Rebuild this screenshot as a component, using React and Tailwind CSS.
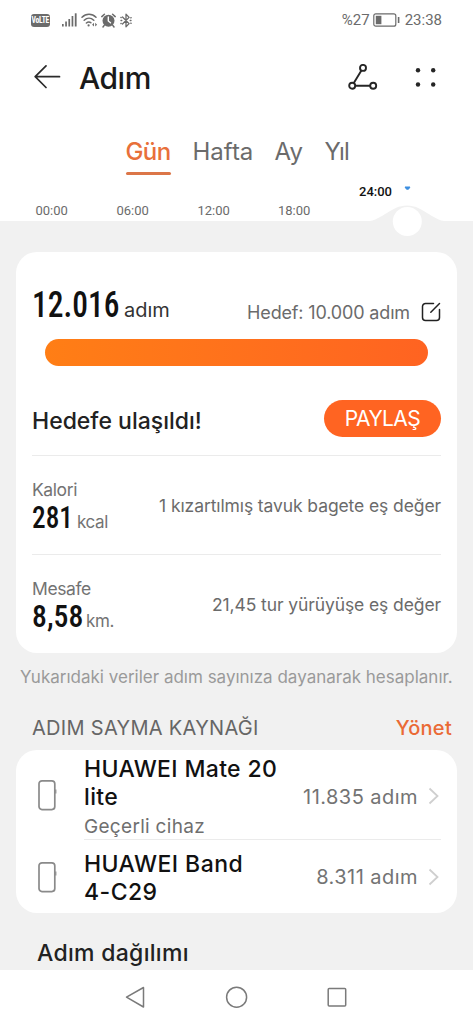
import React from "react";

function StatusBar() {
  return (
    <div className="flex h-10 items-center justify-between pl-[31px] pr-[31px] font-[Roboto,sans-serif] text-[#6b6b6b]">
      <div className="flex items-center">
        <div className="flex h-[13px] w-[19px] items-center justify-center rounded-[3px] bg-[#6b6b6b]">
          <span className="scale-x-[.85] text-[9px] font-bold leading-none tracking-[-0.3px] text-white font-stretch-condensed">VoLTE</span>
        </div>
        <svg className="ml-3" width="15" height="14" viewBox="0 0 15 14" fill="#6b6b6b">
          <rect x="0" y="11" width="1.7" height="2.5" />
          <rect x="3.2" y="8.5" width="1.7" height="5" />
          <rect x="6.4" y="6" width="1.7" height="7.5" />
          <rect x="9.6" y="3" width="1.7" height="10.5" />
          <rect x="12.8" y="0.3" width="1.8" height="13.2" />
        </svg>
        <svg className="ml-1" width="17" height="14" viewBox="0 0 17 14" fill="none" stroke="#6b6b6b" strokeWidth="1.5" strokeLinecap="round">
          <path d="M1 4.200C5 .2 11 .2 15 4.200M3.200 7.200c2.800-2.600 6.800-2.600 9.600 0M5.400 10c1.600-1.300 3-1.300 4.400-.3" />
          <circle cx="7.600" cy="12.400" r="1.100" fill="#6b6b6b" stroke="none" />
          <path d="M13 9.800l-1.900 1.900L13 13.600zM14.200 9.800l1.900 1.900-1.900 1.900z" fill="#6b6b6b" stroke="none" />
        </svg>
        <svg className="ml-[3px]" width="15" height="15" viewBox="0 0 15 15" fill="none" stroke="#6b6b6b" strokeLinecap="round">
          <circle cx="7.5" cy="7.700" r="6" fill="#6b6b6b" stroke="none" />
          <path d="M.8 3.600L3.400 1.200M14.200 3.600L11.600 1.200M3.200 12.400l-1.200 1.600M11.800 12.400l1.200 1.600" strokeWidth="1.5" />
          <path d="M7.300 4v4l2.200 1.800" stroke="#fff" strokeWidth="1.4" />
        </svg>
        <svg className="ml-[4px]" width="12" height="15" viewBox="0 0 12 15" fill="none" stroke="#6b6b6b" strokeWidth="1.300" strokeLinejoin="round" strokeLinecap="round">
          <path d="M2.500 4l6.600 6.600L6 13.800v-12.600l3.100 3.200L2.500 11" />
          <path d="M1 7.500h.8M10.200 7.500h.8M.9 4.400l.3.200M10.800 4.900l.4-.2M.9 10.600l.3-.2M10.800 10.100l.4.200" />
        </svg>
      </div>
      <div className="flex items-center text-[15px] leading-none">
        <span>%27</span>
        <svg className="ml-[3px] mr-[5px]" width="27" height="14" viewBox="0 0 27 14" fill="none" stroke="#6b6b6b" strokeWidth="1.2">
          <rect x=".8" y=".8" width="22" height="12.400" rx="2" />
          <rect x="2.800" y="2.800" width="5.600" height="8.400" fill="#6b6b6b" stroke="none" />
          <path d="M25.600 4v6" strokeWidth="1.600" />
        </svg>
        <span>23:38</span>
      </div>
    </div>
  );
}

function Header() {
  return (
    <header className="flex h-[76px] items-center pl-[34px] pr-9 text-[#1a1a1a]">
      <svg width="27" height="26" viewBox="0 0 27 26" fill="none" stroke="#2b2b2b" strokeWidth="1.7" strokeLinecap="round" strokeLinejoin="round">
        <path d="M25.500 11.700H1.500M12 .9L1.200 11.700 12 22.500" />
      </svg>
      <h1 className="ml-[18px] text-[30px] font-[450] leading-none tracking-[-0.5px]">Adım</h1>
      <svg className="ml-auto" width="31" height="28" viewBox="0 0 31 28" fill="none" stroke="#262626" strokeWidth="1.9">
        <circle cx="16" cy="3.900" r="3" />
        <circle cx="5.200" cy="21.700" r="3" />
        <circle cx="26.200" cy="21.700" r="3" />
        <path d="M14.400 6.500L6.800 19.100M8.200 21.700h15" />
      </svg>
      <svg className="ml-[37px]" width="22" height="20" viewBox="0 0 22 20" fill="#262626">
        <circle cx="3" cy="1.900" r="2.200" transform="translate(0 .4)" />
        <circle cx="18.200" cy="2.300" r="2.200" />
        <circle cx="3" cy="16.500" r="2.200" />
        <circle cx="18.200" cy="16.500" r="2.200" />
      </svg>
    </header>
  );
}

function Tabs() {
  return (
    <nav className="flex h-[58px] justify-center text-[24px] leading-none text-[#6b6b6b]">
      <div className="flex items-start gap-[22px]">
        <div className="flex w-[45px] flex-col">
          <span className="h-[32px] whitespace-nowrap font-[450] tracking-[-0.6px] text-[#e8703a]">Gün</span>
          <span className="h-[3px] rounded-full bg-[#dc7648]" />
        </div>
        <span className="w-[60px]">Hafta</span>
        <span className="w-7">Ay</span>
        <span className="w-[23px] tracking-[-1px]">Yıl</span>
      </div>
    </nav>
  );
}

function Timeline() {
  return (
    <div className="relative h-[46px] font-[Roboto,sans-serif] text-[13px] leading-none text-[#6b6b6b]">
      <div className="flex h-full items-end pb-1 pl-[35.5px]">
        <span className="w-[81px]">00:00</span>
        <span className="w-[81px]">06:00</span>
        <span className="w-[80.500px]">12:00</span>
        <span>18:00</span>
      </div>
      <span className="absolute left-[359px] top-[10px] font-medium text-[#111]">24:00</span>
      <svg className="absolute left-[365px] top-[7px]" width="84" height="58" viewBox="0 0 84 58">
        <path d="M2 39.500C18 38 26 23.500 42 23.500S66 38 82 39.500z" fill="#f1f1f1" />
        <circle cx="42.300" cy="39.500" r="14.500" fill="#fff" />
        <path d="M40 5h5l-1.500 2.200h-2z" fill="#3c8ee0" stroke="#3c8ee0" strokeLinejoin="round" />
      </svg>
    </div>
  );
}

function Stat({ label, value, unit, valueClass, scaleClass, note }) {
  return (
    <div className="flex h-[99px] items-center justify-between border-t border-[#ebebeb]">
      <div className="flex flex-col pt-[3px]">
        <span className="text-[17.500px] leading-[22px] tracking-[-0.4px] text-[#737373]">{label}</span>
        <span className="flex h-[33px] items-baseline">
          <span className={valueClass}>
            <span className={scaleClass}>
              <span className="font-[Roboto,sans-serif] text-[31px] font-[480] leading-[33px] text-[#111] font-stretch-condensed">{value}</span>
            </span>
          </span>
          <span className="text-[17px] leading-none tracking-[-0.4px] text-[#737373]">{unit}</span>
        </span>
      </div>
      <span className="pt-[2px] text-[17.500px] leading-none tracking-[-0.1px] text-[#6b6b6b]">{note}</span>
    </div>
  );
}

function GoalCard() {
  return (
    <section className="mx-4 mt-[31px] h-[401px] rounded-[21px] bg-white px-4">
      <div className="flex h-[87px] items-end pb-[17px]">
        <div className="-mb-px flex items-baseline">
          <span className="w-[92px]">
            <span className="inline-block origin-left scale-x-[.85] font-[Roboto,sans-serif] text-[37px] font-[480] leading-[37px] text-[#111] font-stretch-condensed">12.016</span>
          </span>
          <span className="text-[20px] leading-none text-[#333]">adım</span>
        </div>
        <span className="ml-auto text-[18px] leading-none tracking-[-0.15px] text-[#6b6b6b]">Hedef: 10.000 adım</span>
        <svg className="ml-[11px]" width="20" height="20" viewBox="0 0 20 20" fill="none" stroke="#222" strokeWidth="1.5" strokeLinecap="round">
          <path d="M12.500 1.500H4.500a3 3 0 0 0-3 3v11a3 3 0 0 0 3 3h11a3 3 0 0 0 3-3V7.500M9.800 10.200l8.700-8.700" />
        </svg>
      </div>
      <div className="ml-[13px] h-[27px] w-[383px] rounded-full bg-linear-to-r from-[#ff7e15] to-[#ff6321]" />
      <div className="flex h-[89px] items-center justify-between pt-[21px]">
        <span className="text-[23px] font-[450] leading-none text-[#222]">Hedefe ulaşıldı!</span>
        <button className="-mt-[5px] h-[37px] w-[117px] rounded-full bg-[#ff6422] text-[21px] leading-none tracking-[-0.6px] text-white">PAYLAŞ</button>
      </div>
      <Stat label="Kalori" value="281" unit="kcal" valueClass="w-[45px]" scaleClass="inline-block origin-left scale-x-[.88]" note="1 kızartılmış tavuk bagete eş değer" />
      <Stat label="Mesafe" value="8,58" unit="km." valueClass="w-[54px]" scaleClass="inline-block origin-left scale-x-[.96]" note="21,45 tur yürüyüşe eş değer" />
    </section>
  );
}

function PhoneIcon() {
  return (
    <svg width="20" height="32" viewBox="0 0 20 32" fill="none" stroke="#8a8a8a" strokeWidth="1.700">
      <rect x="2" y="1.800" width="15.800" height="28.800" rx="3" />
      <path d="M18.800 10.500v4" strokeWidth="1.200" />
    </svg>
  );
}

function Steps({ children }) {
  return (
    <div className="ml-auto flex items-center">
      <span className="pt-px text-[20px] leading-none tracking-[0.45px] text-[#737373]">{children}</span>
      <svg className="ml-[10px] mr-px" width="12" height="18" viewBox="0 0 12 18" fill="none" stroke="#cfcfcf" strokeWidth="1.800">
        <path d="M1.500 1.500L9.500 9l-8 7.500" />
      </svg>
    </div>
  );
}

function Sources() {
  return (
    <section className="mx-4 h-[163px] rounded-[21px] bg-white pl-[21px] pr-4">
      <div className="flex h-[90px] items-center">
        <PhoneIcon />
        <div className="ml-[27px] flex h-full flex-1 items-center border-b border-[#ebebeb]">
          <div>
            <p className="w-[205px] pt-[7px] text-[23px] font-[450] leading-7 tracking-[0.35px] text-[#111]">HUAWEI Mate 20 lite</p>
            <p className="text-[19px] leading-[31px] tracking-[0.3px] text-[#6f6f6f]">Geçerli cihaz</p>
          </div>
          <div className="ml-auto flex pt-[3px]"><Steps>11.835 adım</Steps></div>
        </div>
      </div>
      <div className="flex h-[73px] items-center">
        <PhoneIcon />
        <p className="ml-[27px] w-[205px] pt-[3px] text-[23px] font-[450] leading-7 tracking-[0.45px] text-[#111]">HUAWEI Band<br />4-C29</p>
        <Steps>8.311 adım</Steps>
      </div>
    </section>
  );
}

function NavBar() {
  return (
    <footer className="flex h-[54px] items-center justify-center gap-[78px] bg-white">
      <svg width="22" height="24" viewBox="0 0 22 24" fill="none" stroke="#7a7a7a" strokeWidth="1.500" strokeLinejoin="round">
        <path d="M18.500 2.500v19.500L1.500 12.200z" />
      </svg>
      <svg width="24" height="24" viewBox="0 0 24 24" fill="none" stroke="#7a7a7a" strokeWidth="1.500">
        <circle cx="11.600" cy="12.200" r="10" />
      </svg>
      <svg width="22" height="24" viewBox="0 0 22 24" fill="none" stroke="#7a7a7a" strokeWidth="1.500">
        <rect x="1.200" y="3.500" width="17.500" height="17.500" rx="1" />
      </svg>
    </footer>
  );
}

export default function App() {
  return (
    <div className="flex h-[1024px] w-[473px] flex-col overflow-hidden bg-[#f1f1f1] font-[Inter,sans-serif]">
      <div className="bg-white">
        <StatusBar />
        <Header />
        <div className="pt-6"><Tabs /></div>
        <div className="-mt-[23px]"><Timeline /></div>
      </div>
      <GoalCard />
      <p className="flex h-[49px] items-center whitespace-nowrap pl-5 text-[17px] leading-none text-[#9a9a9a]">Yukarıdaki veriler adım sayınıza dayanarak hesaplanır.</p>
      <div className="flex h-[48px] items-center justify-between pl-8 pr-[21px] pt-[3px] text-[20px] leading-none">
        <h2 className="tracking-[0.3px] text-[#666]">ADIM SAYMA KAYNAĞI</h2>
        <button className="font-[450] tracking-[0.3px] text-[#ea6a35]">Yönet</button>
      </div>
      <Sources />
      <h2 className="flex flex-1 items-center pl-[37px] pt-[24px] text-[23px] font-[450] leading-none tracking-[0.3px] text-[#222]">Adım dağılımı</h2>
      <NavBar />
    </div>
  );
}
